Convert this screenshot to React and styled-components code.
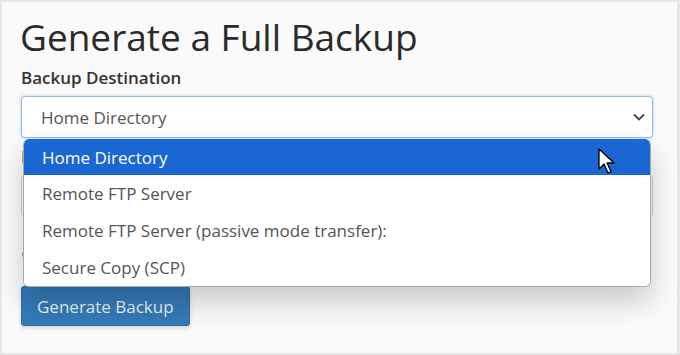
import React from "react";
import styled, { createGlobalStyle } from "styled-components";

const Global = createGlobalStyle`
  html, body {
    margin: 0;
    padding: 0;
    background: #e6e6e6;
  }
  body {
    font-family: "Open Sans", "Liberation Sans", sans-serif;
  }
`;

const Frame = styled.div`
  box-sizing: border-box;
  width: 680px;
  height: 355px;
  margin: 0;
  padding: 13px 24px 0 19px;
  background: #fafafa;
  border: 2px solid #e6e6e6;
  border-right-width: 3px;
  overflow: hidden;
`;

const Title = styled.h1`
  margin: 0 0 0 -1px;
  font-size: 37px;
  font-weight: 400;
  line-height: 44px;
  color: #2a2a2a;
`;

const Label = styled.label`
  display: block;
  margin: 8px 0 7px;
  font-size: 17px;
  font-weight: 600;
  color: ${(p) => p.$color || "#333"};
  line-height: 22px;
`;

const SelectWrap = styled.div`
  position: relative;
`;

const Select = styled.div`
  box-sizing: border-box;
  height: 42px;
  display: flex;
  align-items: center;
  justify-content: space-between;
  padding: 0 6px 0 19px;
  background: #fff;
  border: 1px solid #8fbde8;
  border-radius: 4px;
  box-shadow: 0 0 3px rgba(102, 175, 233, 0.6);
  font-size: 17px;
  color: #555;
`;

const Menu = styled.ul`
  position: absolute;
  top: 43px;
  left: 2px;
  right: 2px;
  margin: 0;
  padding: 0;
  list-style: none;
  background: #fff;
  border: 1px solid #a8a8a8;
  border-top: none;
  border-radius: 6px;
  overflow: hidden;
  box-shadow: 0 14px 30px rgba(0, 0, 0, 0.2);
  z-index: 2;
`;

const Item = styled.li`
  height: ${(p) => (p.$active ? "36px" : "37px")};
  display: flex;
  align-items: center;
  padding-left: 18px;
  font-size: 17px;
  color: ${(p) => (p.$active ? "#fff" : "#555")};
  background: ${(p) => (p.$active ? "#1a66d2" : "#fff")};
`;

const Input = styled.div`
  box-sizing: border-box;
  height: 42px;
  border: 1px solid #ccc;
  border-radius: 4px;
  background: #fff;
`;

const Radio = styled.div`
  margin-top: 26px;
  font-size: 15px;
  color: #555;
  line-height: 20px;
`;

const Button = styled.button`
  margin-top: 23px;
  height: 40px;
  padding: 0 15px;
  font-family: inherit;
  font-size: 17px;
  color: #e9f0f7;
  background: #337ab7;
  border: 1px solid #2e6da4;
  border-radius: 3px;
  box-shadow: 0 2px 4px rgba(0, 0, 0, 0.15);
`;

const Cursor = styled.svg`
  position: absolute;
  left: 574px;
  top: 9px;
`;

const Chevron = () => (
  <svg width="14" height="10" viewBox="0 0 14 10">
    <path d="M2 2.5l5 5 5-5" fill="none" stroke="#444" strokeWidth="1.8" />
  </svg>
);

const options = [
  "Home Directory",
  "Remote FTP Server",
  "Remote FTP Server (passive mode transfer):",
  "Secure Copy (SCP)",
];

export default function App() {
  return (
    <>
      <Global />
      <Frame>
        <Title>Generate a Full Backup</Title>
        <Label>Backup Destination</Label>
        <SelectWrap>
          <Select>
            Home Directory
            <Chevron />
          </Select>
          <Menu>
            {options.map((o, i) => (
              <Item key={o} $active={i === 0}>
                {o}
              </Item>
            ))}
            <Cursor width="18" height="26" viewBox="0 0 18 26">
              <path
                d="M1 1v20l5-5 4 9 3-1.5-4-8.5h7z"
                fill="#fff"
                stroke="#000"
                strokeWidth="1.3"
                strokeLinejoin="round"
              />
            </Cursor>
          </Menu>
        </SelectWrap>
        <Label $color="#5a3a22">Email Address</Label>
        <Input />
        <Radio>○ Do not send email notification of backup completion.</Radio>
        <Button>Generate Backup</Button>
      </Frame>
    </>
  );
}
